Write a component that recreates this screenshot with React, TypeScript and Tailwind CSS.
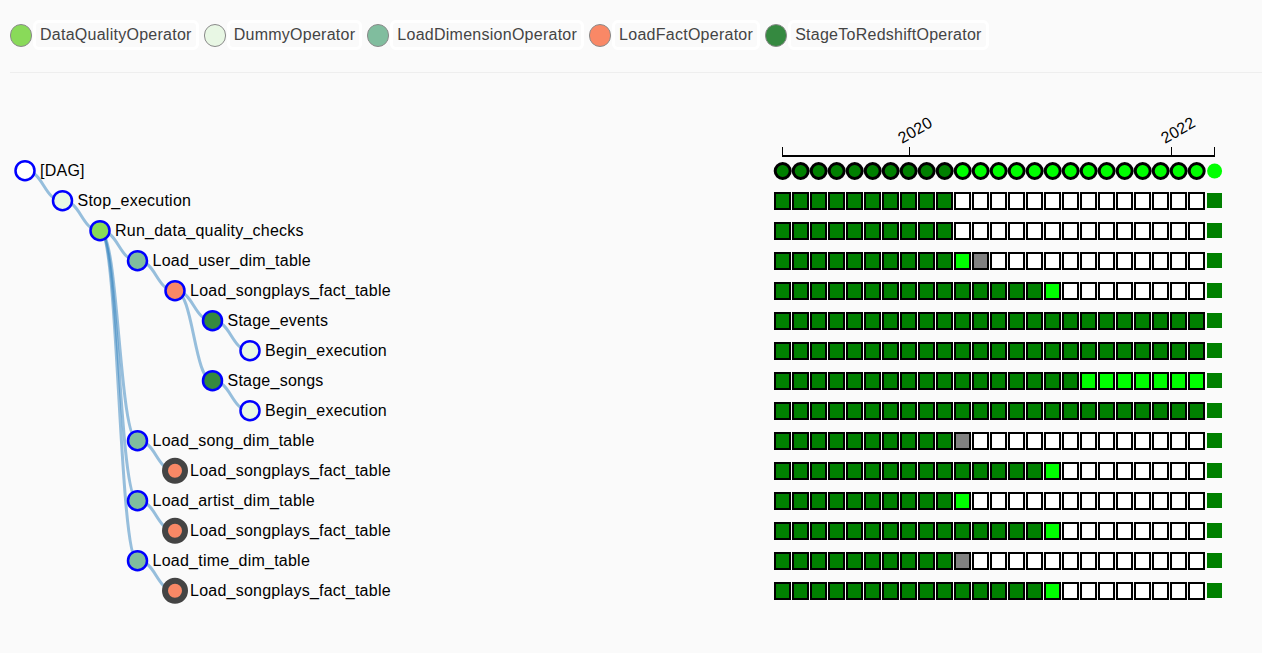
import React from "react";

type Node = { name: string; depth: number; fill: string; parent: number | null; collapsed?: boolean };
const DQ = "#89DA59", DU = "#E8F7E4", LD = "#80BD9E", LF = "#F98866", ST = "#358940";

const legend = [
  ["DataQualityOperator", "bg-[#89DA59]"],
  ["DummyOperator", "bg-[#E8F7E4]"],
  ["LoadDimensionOperator", "bg-[#80BD9E]"],
  ["LoadFactOperator", "bg-[#F98866]"],
  ["StageToRedshiftOperator", "bg-[#358940]"],
];

const nodes: Node[] = [
  { name: "[DAG]", depth: 0, fill: "#ffffff", parent: null },
  { name: "Stop_execution", depth: 1, fill: DU, parent: 0 },
  { name: "Run_data_quality_checks", depth: 2, fill: DQ, parent: 1 },
  { name: "Load_user_dim_table", depth: 3, fill: LD, parent: 2 },
  { name: "Load_songplays_fact_table", depth: 4, fill: LF, parent: 3 },
  { name: "Stage_events", depth: 5, fill: ST, parent: 4 },
  { name: "Begin_execution", depth: 6, fill: DU, parent: 5 },
  { name: "Stage_songs", depth: 5, fill: ST, parent: 4 },
  { name: "Begin_execution", depth: 6, fill: DU, parent: 7 },
  { name: "Load_song_dim_table", depth: 3, fill: LD, parent: 2 },
  { name: "Load_songplays_fact_table", depth: 4, fill: LF, parent: 9, collapsed: true },
  { name: "Load_artist_dim_table", depth: 3, fill: LD, parent: 2 },
  { name: "Load_songplays_fact_table", depth: 4, fill: LF, parent: 11, collapsed: true },
  { name: "Load_time_dim_table", depth: 3, fill: LD, parent: 2 },
  { name: "Load_songplays_fact_table", depth: 4, fill: LF, parent: 13, collapsed: true },
];

const px = (d: number) => 25 + 37.5 * d;
const py = (i: number) => 170.7 + 30 * i;

const linkPath = (i: number) => {
  const n = nodes[i];
  const p = n.parent as number;
  const x0 = px(nodes[p].depth), y0 = py(p), x1 = px(n.depth), y1 = py(i);
  const m = (x0 + x1) / 2;
  return `M${x0},${y0}C${m},${y0} ${m},${y1} ${x1},${y1}`;
};

// g = success, l = running, a = grey, w = white
const row = (spec: [string, number][]) => spec.flatMap(([c, n]) => Array<string>(n).fill(c));
const songplays = row([["g", 15], ["l", 1], ["w", 8]]);
const allGreen = row([["g", 24]]);
const rows: string[][] = [
  row([["g", 10], ["w", 14]]),
  row([["g", 10], ["w", 14]]),
  row([["g", 10], ["l", 1], ["a", 1], ["w", 12]]),
  songplays,
  allGreen,
  allGreen,
  row([["g", 17], ["l", 7]]),
  allGreen,
  row([["g", 10], ["a", 1], ["w", 13]]),
  songplays,
  row([["g", 10], ["l", 1], ["w", 13]]),
  songplays,
  row([["g", 10], ["a", 1], ["w", 13]]),
  songplays,
];
const topRow = row([["g", 10], ["l", 14]]);

function Square({ c }: { c: string }) {
  const cls =
    c === "g"
      ? "bg-[#008000]"
      : c === "l"
      ? "bg-[#00ff00]"
      : c === "a"
      ? "bg-[#808080]"
      : "bg-white";
  return <div className={`w-[17px] h-[18px] mr-px border-2 border-black shrink-0 ${cls}`} />;
}

export default function App() {
  return (
    <div className="w-[1262px] h-[653px] overflow-hidden bg-[#fafafa] font-['Liberation_Sans',Arial,sans-serif]">
      <div className="flex items-center pl-[10px] pt-[20px]">
        {legend.map(([label, color]) => (
          <div key={label} className="flex items-center mr-[5px]">
            <span className={`w-[22px] h-[23px] rounded-full border border-[#8a8a8a] ${color}`} />
            <span className="ml-px h-[30px] flex items-center px-[4px] border-[3px] border-white rounded-[6px] text-base tracking-[0.26px] text-[#444444]">
              {label}
            </span>
          </div>
        ))}
      </div>
      <div className="ml-[10px] mt-[22px] border-t border-[#eeeeee]" />
      <div className="flex">
        <svg className="w-[774px] h-[580px] shrink-0" viewBox="0 73 774 580">
          {nodes.map((n, i) =>
            n.parent === null ? null : (
              <path key={i} d={linkPath(i)} fill="none" stroke="#3182bd" strokeWidth={3} opacity={0.5} />
            )
          )}
          {nodes.map((n, i) => (
            <g key={i}>
              <circle
                cx={px(n.depth)}
                cy={py(i)}
                r={n.collapsed ? 10 : 9.5}
                fill={n.fill}
                stroke={n.collapsed ? "#444444" : "#0000ff"}
                strokeWidth={n.collapsed ? 6 : 2.5}
              />
              <text x={px(n.depth) + 15} y={py(i) + 5.5} fontSize={16} fill="#000000" className="tracking-[0.24px]">
                {n.name}
              </text>
            </g>
          ))}
        </svg>
        <div className="flex flex-col">
          <svg className="w-[460px] h-[89px] overflow-visible" viewBox="774 73 460 89">
            <path d="M782.5,147V156H1214.5V147" fill="none" stroke="#000" strokeWidth={1} />
            <line x1={782} y1={156} x2={1215} y2={156} stroke="#000" strokeWidth={2} />
            <line x1={909.5} y1={147} x2={909.5} y2={156} stroke="#000" strokeWidth={1} />
            <line x1={1171.5} y1={147} x2={1171.5} y2={156} stroke="#000" strokeWidth={1} />
            <text x={902} y={144} fontSize={16} fill="#000" className="tracking-[0.2px]" transform="rotate(-30 902 144)">2020</text>
            <text x={1165} y={144} fontSize={16} fill="#000" className="tracking-[0.2px]" transform="rotate(-30 1165 144)">2022</text>
          </svg>
          <svg className="w-[460px] h-[18px] mb-[12px] overflow-visible" viewBox="774 162 460 18">
            {topRow.map((c, i) => (
              <circle
                key={i}
                cx={782.7 + 18 * i}
                cy={171}
                r={7.5}
                fill={c === "g" ? "#008000" : "#00ff00"}
                stroke="#000000"
                strokeWidth={3}
              />
            ))}
            <circle cx={1214.6} cy={171} r={7.5} fill="#00ff00" />
          </svg>
          <div className="flex flex-col gap-[12px]">
            {rows.map((r, i) => (
              <div key={i} className="flex h-[18px]">
                {r.map((c, j) => (
                  <Square key={j} c={c} />
                ))}
                <div className="w-[15px] h-[15px] ml-px mt-px bg-[#008000]" />
              </div>
            ))}
          </div>
        </div>
      </div>
    </div>
  );
}
